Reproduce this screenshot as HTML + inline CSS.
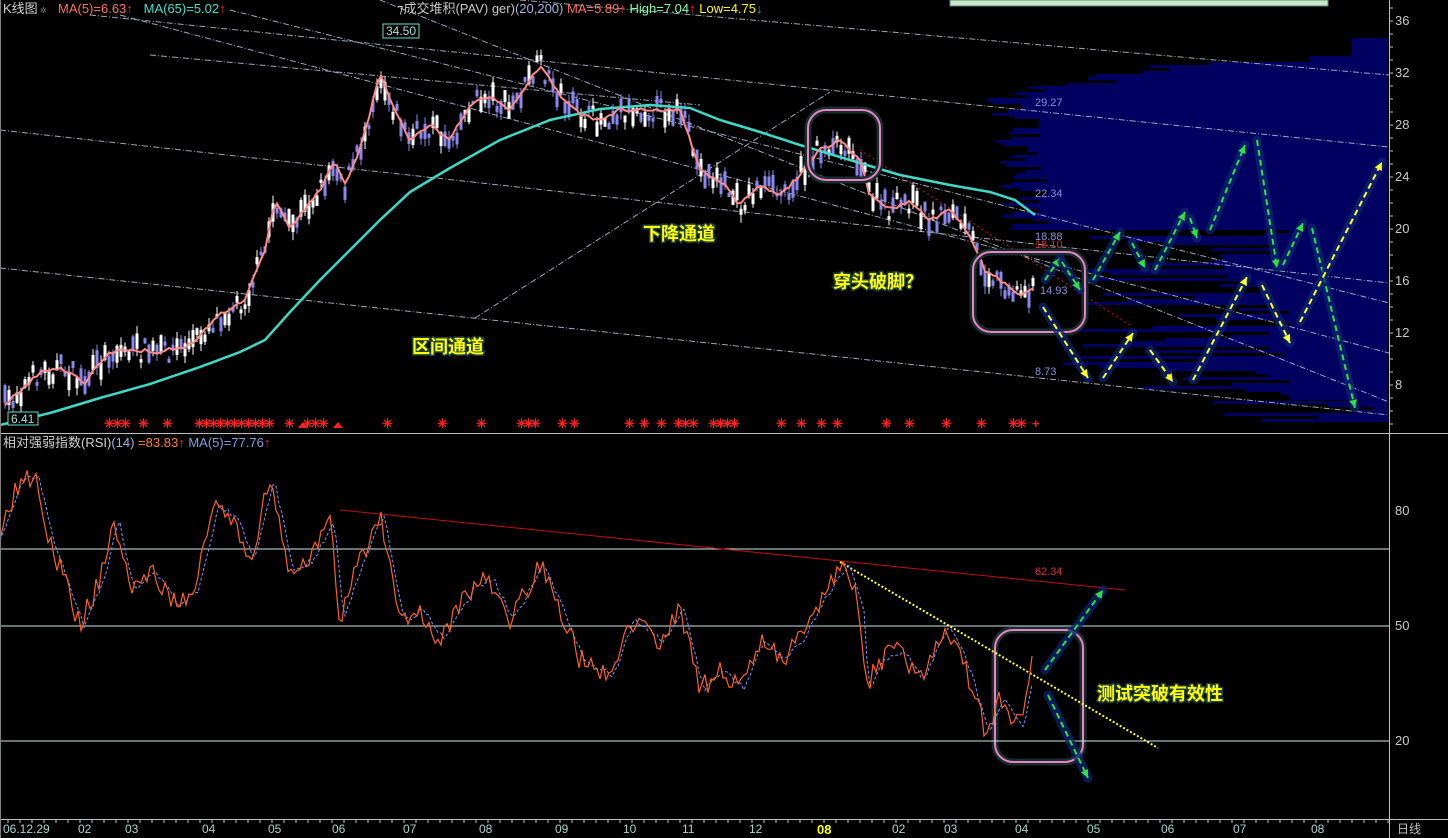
<!DOCTYPE html>
<html><head><meta charset="utf-8">
<style>
html,body{margin:0;padding:0;background:#000;width:1448px;height:838px;overflow:hidden}
svg{display:block}
text{font-family:"Liberation Sans","Noto Sans CJK SC",sans-serif}
.ax{fill:#c8c8c8;font-size:13px}
.bx{fill:#a8e0d8;font-size:12px}
.cn{fill:#ffff00;font-size:18px;font-weight:bold;stroke:#204040;stroke-width:3px;paint-order:stroke}
.lb{fill:#8890d8;font-size:11px}
</style></head><body>
<svg id="s" width="1448" height="838" viewBox="0 0 1448 838" xmlns="http://www.w3.org/2000/svg">
<rect width="1448" height="838" fill="#000"/>
<g id="prof" fill="#000060"></g>
<g stroke="#9aa8b8" stroke-width="1" stroke-dasharray="6,2,1,2" fill="none">
<line x1="90" y1="15" x2="1389" y2="147"/>
<line x1="230" y1="10" x2="1389" y2="303"/>
<line x1="0" y1="130" x2="1389" y2="283"/>
<line x1="0" y1="268" x2="1389" y2="415"/>
<line x1="120" y1="15" x2="1389" y2="353"/>
<line x1="380" y1="0" x2="1389" y2="402"/>
<line x1="150" y1="55" x2="700" y2="105"/>
<line x1="475" y1="318" x2="830" y2="92"/>
<line x1="520" y1="0" x2="1389" y2="75"/>
</g>
<line x1="860" y1="150" x2="1130" y2="325" stroke="#d01010" stroke-dasharray="2,3"/>
<g id="cand"></g>
<polyline id="ma65" fill="none" stroke="#40d8c8" stroke-width="2.5"/>
<polyline id="ma5" fill="none" stroke="#ff8888" stroke-width="2"/>
<rect x="950" y="0" width="378" height="6" fill="#c8e8c0" stroke="#6080a0"/>
<g fill="none">
<rect x="808" y="110" width="72" height="70" rx="18" stroke="#13302e" stroke-width="7"/>
<rect x="808" y="110" width="72" height="70" rx="18" stroke="#f080c0" stroke-width="2"/>
<rect x="973" y="252" width="112" height="80" rx="18" stroke="#13302e" stroke-width="7"/>
<rect x="973" y="252" width="112" height="80" rx="18" stroke="#f080c0" stroke-width="2"/>
<rect x="995" y="630" width="88" height="132" rx="18" stroke="#13302e" stroke-width="7"/>
<rect x="995" y="630" width="88" height="132" rx="18" stroke="#f080c0" stroke-width="2"/>
</g>
<g id="arr"></g>
<rect x="383" y="24" width="36" height="14" fill="#000" stroke="#60e0d0"/>
<text x="386" y="35" class="bx">34.50</text>
<rect x="8" y="412" width="30" height="13" fill="#000" stroke="#60e0d0"/>
<text x="11" y="423" class="bx">6.41</text>
<text x="1035" y="106" class="lb">29.27</text>
<text x="1035" y="197" class="lb">22.34</text>
<text x="1035" y="240" class="lb">18.88</text>
<text x="1035" y="248" class="lb" style="fill:#d03030">18.10</text>
<text x="1040" y="294" class="lb">14.93</text>
<text x="1035" y="375" class="lb">8.73</text>
<text x="1035" y="575" class="lb" style="fill:#e03030">62.34</text>
<text x="643" y="240" class="cn">下降通道</text>
<text x="412" y="353" class="cn">区间通道</text>
<text x="833" y="288" class="cn">穿头破脚？</text>
<text x="1097" y="700" class="cn">测试突破有效性</text>
<g id="stars" fill="#ff2020" font-size="13" font-weight="bold"></g>
<text y="13" font-size="13"><tspan x="3" fill="#d0d0d0">K线图</tspan><tspan x="40" fill="#808080" font-size="8">✲</tspan><tspan x="58" fill="#ff7060">MA(5)=6.63</tspan><tspan fill="#ff2020">↑</tspan><tspan x="140" fill="#40e0d0"> MA(65)=5.02</tspan><tspan fill="#ff2020">↑</tspan></text>
<text y="13" font-size="13"><tspan x="397" fill="#c8c8c8">⁊成交堆积(PAV) ger)</tspan><tspan fill="#a0b0e0">(20,200) </tspan><tspan fill="#ff7060">MA=5.89</tspan><tspan fill="#ff2020">↑</tspan><tspan fill="#80ffa0"> High=7.04</tspan><tspan fill="#ff2020">↑</tspan><tspan fill="#ffff00"> Low=4.75</tspan><tspan fill="#20d020">↓</tspan></text>
<text x="3" y="447" font-size="13"><tspan fill="#d0d0d0">相对强弱指数(RSI)</tspan><tspan fill="#a0b0e0">(14) </tspan><tspan fill="#ff8020">=83.83</tspan><tspan fill="#ff2020">↑</tspan><tspan fill="#80a0e0"> MA(5)=77.76</tspan><tspan fill="#ff2020">↑</tspan></text>
<g stroke="#c8e8e8" stroke-width="1"><line x1="0" y1="549" x2="1389" y2="549"/><line x1="0" y1="626" x2="1389" y2="626"/><line x1="0" y1="741" x2="1389" y2="741"/></g>
<line x1="340" y1="510" x2="1125" y2="590" stroke="#c01010"/>
<line x1="840" y1="562" x2="1158" y2="748" stroke="#ffff30" stroke-width="2" stroke-dasharray="2,2"/>
<polyline id="rsima" fill="none" stroke="#8090ff" stroke-width="1" stroke-dasharray="3,2"/>
<polyline id="rsi" fill="none" stroke="#ff6020" stroke-width="1.2"/>
<g id="arr2"></g>
<line x1="0" y1="433.5" x2="1448" y2="433.5" stroke="#c0c0c0"/>
<line x1="0" y1="819.5" x2="1448" y2="819.5" stroke="#c0c0c0"/>
<line x1="1389.5" y1="0" x2="1389.5" y2="838" stroke="#c0c0c0"/>
<line x1="0.5" y1="0" x2="0.5" y2="838" stroke="#808080"/>
<g class="ax">
<text x="1395" y="25">36</text><text x="1395" y="77">32</text><text x="1395" y="129">28</text><text x="1395" y="181">24</text><text x="1395" y="233">20</text><text x="1395" y="285">16</text><text x="1395" y="337">12</text><text x="1395" y="389">8</text>
<text x="1395" y="515">80</text><text x="1395" y="630">50</text><text x="1395" y="745">20</text>
</g>
<g id="tk" stroke="#c0c0c0"></g>
<g font-size="12" fill="#a0d8d0">
<text x="3" y="833">06.12.29</text><text x="78" y="833">02</text><text x="125" y="833">03</text><text x="202" y="833">04</text><text x="268" y="833">05</text><text x="332" y="833">06</text><text x="403" y="833">07</text><text x="479" y="833">08</text><text x="555" y="833">09</text><text x="623" y="833">10</text><text x="682" y="833">11</text><text x="749" y="833">12</text><text x="817" y="834" fill="#ffff00" font-weight="bold" font-size="13">08</text><text x="892" y="833">02</text><text x="944" y="833">03</text><text x="1015" y="833">04</text><text x="1087" y="833">05</text><text x="1161" y="833">06</text><text x="1233" y="833">07</text><text x="1311" y="833">08</text><text x="1397" y="833" fill="#c0c0c0">日线</text>
</g>
</svg>
<script>
var NS="http://www.w3.org/2000/svg";
function el(p,t,a){var e=document.createElementNS(NS,t);for(var k in a)e.setAttribute(k,a[k]);p.appendChild(e);return e}
var seed=7;function rnd(){seed=(seed*16807)%2147483647;return seed/2147483647}
function interp(pts,x){for(var i=0;i<pts.length-1;i++){if(x<=pts[i+1][0]){var a=pts[i],b=pts[i+1];return a[1]+(b[1]-a[1])*(x-a[0])/(b[0]-a[0])}}return pts[pts.length-1][1]}
var P=[[5,405],[40,372],[60,368],[85,382],[110,352],[130,350],[160,352],[190,345],[220,315],[245,300],[265,250],[275,200],[290,230],[300,215],[320,190],[335,160],[345,185],[360,150],[380,75],[395,110],[410,140],[430,125],[450,140],[470,105],[490,95],[510,110],[540,65],[560,95],[580,115],[600,120],[620,110],[650,110],[680,110],[700,170],[720,180],[740,205],[760,185],[780,195],[800,175],[820,150],[840,140],[860,160],[870,195],[890,210],[910,200],[930,220],[950,210],[970,235],[985,270],[1000,280],[1020,295],[1035,285]];
var M65=[[0,425],[50,413],[100,398],[150,384],[200,367],[240,352],[265,340],[290,312],[320,280],[350,250],[380,220],[410,192],[450,168],[500,140],[550,120],[600,109],[650,105],[690,108],[720,120],[760,132],[800,145],[850,160],[900,175],[950,185],[990,192],[1015,200],[1035,215]];
var c=document.getElementById('cand'),m5=[],m65=[];
for(var x=5;x<=1035;x+=4){var y=interp(P,x)+(rnd()-.5)*22;var h=3+rnd()*16;var up=rnd()>.5;
el(c,'line',{x1:x,x2:x,y1:y-h/2-rnd()*8,y2:y+h/2+rnd()*8,stroke:up?'#fff':'#8888f0'});
el(c,'rect',{x:x-1.5,y:y-h/2,width:3,height:h,fill:up?'#fff':'#8888f0'});
m5.push(x+','+(interp(P,x)+(rnd()-.5)*4).toFixed(1));}
for(var x=0;x<=1035;x+=5)m65.push(x+','+interp(M65,x).toFixed(1));
document.getElementById('ma5').setAttribute('points',m5.join(' '));
document.getElementById('ma65').setAttribute('points',m65.join(' '));
var pr=document.getElementById('prof');
for(var y=38;y<420;y+=3){var L;
if(y<55)L=1352;else if(y<60)L=1310;else if(y<66)L=1250-(y-60)*20;else if(y<100)L=1130-(y-66)*5+rnd()*60;else if(y<230)L=990+rnd()*60;else L=1040+rnd()*280;
if(y>395)L=1200+rnd()*180;el(pr,'rect',{x:L,y:y,width:1388-L,height:3});}
el(pr,'rect',{x:1290,y:230,width:98,height:170});
function arrow(g,x1,y1,x2,y2,col){el(g,'line',{x1:x1,y1:y1,x2:x2,y2:y2,stroke:'#0c2470','stroke-width':9,'stroke-linecap':'round',opacity:.75});
el(g,'line',{x1:x1,y1:y1,x2:x2,y2:y2,stroke:col,'stroke-width':2,'stroke-dasharray':'6,4'});
var a=Math.atan2(y2-y1,x2-x1),s=9;
el(g,'polygon',{points:x2+','+y2+' '+(x2-s*Math.cos(a-.45))+','+(y2-s*Math.sin(a-.45))+' '+(x2-s*Math.cos(a+.45))+','+(y2-s*Math.sin(a+.45)),fill:col});}
var A=document.getElementById('arr'),G='#30e040',Y='#ffff20';
[[1045,280,1060,258],[1062,262,1080,290],[1093,280,1120,232],[1132,243,1145,268],[1155,270,1185,212],[1190,218,1197,238],[1210,230,1245,145],[1257,140,1277,268],[1283,265,1303,223],[1312,228,1355,408]].forEach(function(a){arrow(A,a[0],a[1],a[2],a[3],G)});
[[1043,307,1088,378],[1103,378,1133,333],[1150,350,1173,382],[1193,380,1247,277],[1262,285,1290,343],[1300,322,1382,162]].forEach(function(a){arrow(A,a[0],a[1],a[2],a[3],Y)});
var A2=document.getElementById('arr2');arrow(A2,1045,670,1103,590,G);arrow(A2,1048,695,1088,778,G);
var st=document.getElementById('stars');
[108,116,124,142,166,198,205,212,219,226,233,240,247,254,261,268,288,306,314,322,386,441,480,520,527,534,561,573,628,643,660,677,684,692,712,719,726,733,780,800,820,836,885,908,945,980,1012,1020].forEach(function(x){var t=el(st,'text',{x:x-4,y:428});t.textContent='✳';});
var t=el(st,'text',{x:1032,y:428});t.textContent='+';
el(st,'polygon',{points:'298,428 303,422 308,428'});el(st,'polygon',{points:'333,428 338,422 343,428'});
var R=[[0,530],[20,480],[35,478],[50,540],[80,625],[100,580],[115,520],[130,590],[150,570],[175,605],[195,590],[215,505],[235,520],[250,560],[270,480],[290,570],[310,560],[330,520],[340,620],[360,560],[380,515],[400,620],[420,610],[440,640],[470,590],[490,580],[510,620],[540,565],[560,610],[580,660],[610,675],[630,620],[660,640],[680,610],[700,690],[720,670],[740,690],[760,640],[780,660],[800,640],[820,600],[845,565],[860,610],[865,690],[880,660],[900,650],[920,680],[945,625],[960,650],[985,730],[1000,700],[1020,725],[1032,660]];
var r=[],rm=[];for(var x=0;x<=1032;x+=3){r.push(x+','+(interp(R,x)+(rnd()-.5)*22).toFixed(1));rm.push(x+','+(interp(R,x-4)+(rnd()-.5)*6).toFixed(1));}
document.getElementById('rsi').setAttribute('points',r.join(' '));
document.getElementById('rsima').setAttribute('points',rm.join(' '));
var tk=document.getElementById('tk');for(var x=8;x<1389;x+=12)el(tk,'line',{x1:x,x2:x,y1:820,y2:823});
for(var y=8;y<430;y+=13)el(tk,'line',{x1:1389,x2:1393,y1:y,y2:y});
</script>
</body></html>
